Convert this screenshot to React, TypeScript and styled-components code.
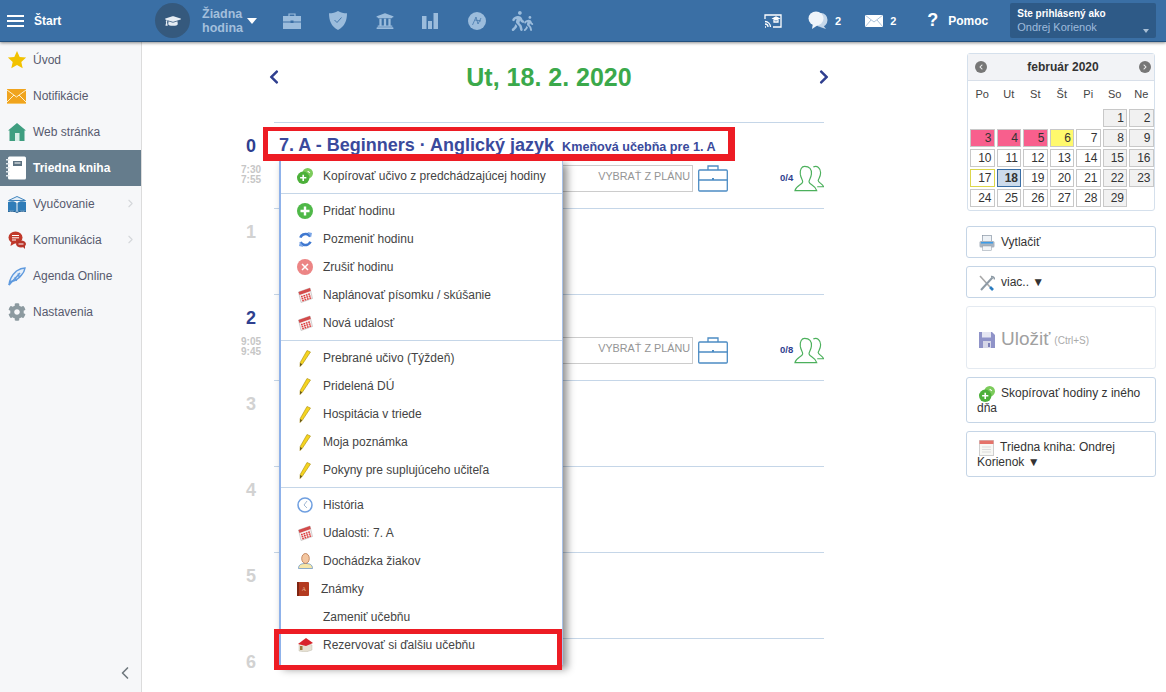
import React from 'react';
import styled, { createGlobalStyle } from 'styled-components';
import { FaCog, FaGraduationCap, FaUniversity, FaWalking, FaChevronLeft, FaChevronRight } from 'react-icons/fa';
import { ChevronLeft, ChevronRight } from 'lucide-react';

const GlobalStyle = createGlobalStyle`
  html, body { margin: 0; padding: 0; height: 692px; overflow: hidden; background: #fff; }
  body { font-family: "Liberation Sans", Arial, sans-serif; font-size: 12px; color: #333; }
  * { box-sizing: border-box; }
`;

/* ---------- drawn icons ---------- */

const Star = () => (
  <svg width="20" height="20" viewBox="0 0 20 20"><path d="M10 1l2.700 5.900 6.400.7-4.800 4.300 1.400 6.400L10 15l-5.700 3.300 1.400-6.400L.9 7.600l6.400-.7z" fill="#f2c200" /></svg>
);
const MailOrange = () => (
  <svg width="19" height="15" viewBox="0 0 19 15"><rect width="19" height="14" fill="#f0a41e" /><rect y="14" width="19" height="1" fill="#f6c66a" /><path d="M0 1l9.500 7L19 1M0 13l7-7M19 13l-7-7" stroke="#fff2d0" strokeWidth="1" fill="none" /></svg>
);
const House = () => (
  <svg width="18" height="18" viewBox="0 0 18 18"><path d="M9 0l9 7.500h-1.500V18h-15V7.500H0z" fill="#3f9e80" /><rect x="7" y="10" width="4.500" height="8" fill="#d8eee6" /></svg>
);
const Notebook = () => (
  <svg width="21" height="24" viewBox="0 0 21 24"><rect x="2" y="0.500" width="18" height="23" rx="1.500" fill="#fff" /><rect x="7" y="5" width="9" height="5" fill="#5d7281" /><rect x="8.500" y="6.500" width="6" height="1" fill="#fff" />{[3, 7, 11, 15, 19].map(y => <rect key={y} x="0" y={y} width="3.500" height="1.500" fill="#dfe5ea" />)}</svg>
);
const BookBlue = () => (
  <svg width="18" height="17" viewBox="0 0 18 17"><path d="M9 0.500L0.500 4.500h17z" fill="#e4eef7" stroke="#3f84bd" strokeWidth="1" /><path d="M0 6c3-1 7-1 8.500 1v9C7 14.500 3 14.500 0 15zM18 6c-3-1-7-1-8.500 1v9c1.500-1.500 5.500-1.500 8.500-1z" fill="#2f7cb8" /><path d="M0 15.500c3-.5 7-.5 9 1 2-1.500 6-1.500 9-1" stroke="#1f5f93" fill="none" /></svg>
);
const ChatRed = () => (
  <svg width="18" height="18" viewBox="0 0 18 18"><ellipse cx="7.500" cy="6.500" rx="7" ry="6" fill="#c0392b" /><path d="M3.500 10l-1 5 5-3z" fill="#c0392b" /><ellipse cx="13" cy="13" rx="5" ry="3.500" fill="#b8352a" /><path d="M14 15l3 3v-4z" fill="#b8352a" /><path d="M4 4.500h7M4 6.800h7M4 9h4" stroke="#fff" strokeWidth="1" /><path d="M10.500 13h5" stroke="#fff" strokeWidth="1" /></svg>
);
const Feather = () => (
  <svg width="18" height="19" viewBox="0 0 18 19" fill="none" stroke="#5f9ade" strokeWidth="1.500"><path d="M1 18c.500-6 3-10 7.500-14C11.500 2 14.500 1 17 1c-.500 3-1.500 5-3.500 7-3 4-7.500 6-10.500 6.500z" fill="#e6eff9" /><path d="M1 18L12 6M7 10l1.500 4M10 6.500l1.500 4" /></svg>
);
const Cast = () => (
  <svg width="18" height="14" viewBox="0 0 18 14" fill="none" stroke="#fff" strokeWidth="1.300"><path d="M1 5V1h16v12H9" /><path d="M1 13h1M1 10c1.700 0 3 1.300 3 3M1 7.500c3 0 5.500 2.500 5.500 5.500" /><path d="M9 4.500l3-1.500 3 1.500-3 1.500z" fill="#fff" /><path d="M10 6v2h4V6" /></svg>
);
const Bubbles = () => (
  <svg width="20" height="19" viewBox="0 0 20 19"><ellipse cx="13" cy="9" rx="6.500" ry="7" fill="#c4d7ea" /><path d="M15 14l3 4-6-2z" fill="#c4d7ea" /><ellipse cx="8" cy="7.500" rx="7.500" ry="7" fill="#eef4fa" /><path d="M5 12l-1 6 6-4z" fill="#eef4fa" /></svg>
);
const MailWhite = () => (
  <svg width="18" height="12" viewBox="0 0 18 12"><rect width="18" height="12" fill="#fff" /><path d="M0 0l9 7 9-7M0 12l6-7M18 12l-6-7" stroke="#8aa9c9" strokeWidth="0.700" fill="none" /></svg>
);
const TopCase = () => (
  <svg width="18" height="16" viewBox="0 0 18 16"><path d="M6 3V1h6v2" fill="none" stroke="#9bbcdc" strokeWidth="1.200" /><rect y="3" width="18" height="5.500" fill="#9bbcdc" /><rect y="9.500" width="18" height="6.500" fill="#9bbcdc" /><rect x="7.500" y="7.500" width="3" height="2.500" fill="#3a6fa5" /></svg>
);
const TopShield = () => (
  <svg width="18" height="19" viewBox="0 0 18 19"><path d="M9 0c2.500 1.500 5.500 2.300 9 2.300 0 7-2 13-9 16.700C2 15.300 0 9.300 0 2.300 3.500 2.300 6.500 1.500 9 0z" fill="#9bbcdc" /><path d="M5.500 9l2.500 2.500 4.500-5" stroke="#3a6fa5" strokeWidth="0.900" fill="none" /></svg>
);
const TopBars = () => (
  <svg width="16" height="16" viewBox="0 0 16 16" fill="#9bbcdc"><rect y="3" width="4.500" height="13" /><rect x="6" y="8" width="4" height="8" /><rect x="11.500" y="0" width="4.500" height="16" /></svg>
);
const TopDial = () => (
  <svg width="18" height="18" viewBox="0 0 18 18"><circle cx="9" cy="9" r="9" fill="#9bbcdc" /><path d="M4.500 13L8 5l2 7 3-6M7 8l6 1" stroke="#3a6fa5" strokeWidth="0.700" fill="none" /></svg>
);
const CopyGreen = () => (
  <svg width="16" height="16" viewBox="0 0 18 18"><circle cx="12" cy="6" r="6" fill="#7ccb5b" /><circle cx="7" cy="11" r="7" fill="#4cb03a" /><path d="M7 7.500v7M3.500 11h7" stroke="#fff" strokeWidth="1.800" /><path d="M12 3.500l2.500 2" stroke="#fff" strokeWidth="1.200" /></svg>
);
const PlusGreen = () => (
  <svg width="16" height="16" viewBox="0 0 16 16"><circle cx="8" cy="8" r="8" fill="#4fb848" /><path d="M8 3.500v9M3.500 8h9" stroke="#fff" strokeWidth="2.400" /></svg>
);
const Refresh = () => (
  <svg width="15" height="15" viewBox="0 0 15 15" fill="none"><circle cx="7.500" cy="7.500" r="5.500" stroke="#3f78d0" strokeWidth="2.600" strokeDasharray="12 5.300" transform="rotate(200 7.500 7.500)" /><path d="M9.500 0l4.500 1-1 4.500zM5.500 15L1 14l1-4.500z" fill="#7ba6e6" /></svg>
);
const CrossRed = () => (
  <svg width="16" height="16" viewBox="0 0 16 16"><circle cx="8" cy="8" r="8" fill="#ec8585" /><path d="M5 5l6 6M11 5l-6 6" stroke="#fff" strokeWidth="1.500" /></svg>
);
const CalendarRed = () => (
  <svg width="15" height="16" viewBox="0 0 15 16"><path d="M0.500 5L12 1l2.500 10.500L3 15.500z" fill="#f7eeee" stroke="#a8a8a8" strokeWidth="0.500" /><path d="M0.500 5L12 1l.8 3L1.500 8z" fill="#d34a4a" /><g fill="#dd3d3d">{[0, 1, 2].map(r => [0, 1, 2, 3].map(c => <rect key={`${r}${c}`} x={3 + c * 2.400 + r * 0.600} y={8.800 - c * 0.800 + r * 2} width="1.700" height="1.500" />))}</g></svg>
);
const Pencil = () => (
  <svg width="12" height="17" viewBox="0 0 12 17"><path d="M8 0.500L11.500 2 3.500 14 1 16.500 1.200 12.500z" fill="#f5d41f" stroke="#a88c12" strokeWidth="0.600" /><path d="M1 16.500l.2-3.500 2 1.200z" fill="#5f5218" /></svg>
);
const Clock = () => (
  <svg width="16" height="16" viewBox="0 0 16 16" fill="none"><circle cx="8" cy="8" r="7" stroke="#6f9fe0" strokeWidth="1.500" /><path d="M10 4L7 8l3 3" stroke="#8aa6c8" strokeWidth="0.800" /></svg>
);
const Person = () => (
  <svg width="15" height="16" viewBox="0 0 15 16"><path d="M0.500 15.500c0-4 3-5 7-5s7 1 7 5z" fill="#f6e6a8" stroke="#5b8ec4" strokeWidth="0.700" /><ellipse cx="7.500" cy="5.500" rx="3.800" ry="5" fill="#f3c6a0" stroke="#b0683c" strokeWidth="0.700" /></svg>
);
const RedBook = () => (
  <svg width="12" height="14" viewBox="0 0 12 14"><rect width="12" height="14" rx="1" fill="#b33a20" /><rect width="2" height="14" fill="#7e2512" /><text x="7" y="9" fontSize="6" fill="#e8b08a" textAnchor="middle" fontFamily="Liberation Serif, serif">A</text></svg>
);
const RedHouse = () => (
  <svg width="15" height="14" viewBox="0 0 15 14"><path d="M1 6.500V13l7 1 6-2V7L7 4z" fill="#e6e0d2" stroke="#b5b0a0" strokeWidth="0.400" /><path d="M0 6l8-6 7 5-7 3z" fill="#d8232a" /><rect x="2" y="8" width="2.500" height="4" fill="#9a7a3a" /></svg>
);
const Printer = () => (
  <svg width="16" height="16" viewBox="0 0 16 16"><rect x="3.500" y="0.500" width="9" height="6" fill="#eef2f6" stroke="#8b97a5" strokeWidth="0.700" /><rect x="0.500" y="6" width="15" height="6.500" rx="1.500" fill="#a9b4c0" /><rect x="2" y="7" width="12" height="1.500" fill="#3b9be8" /><rect x="3.500" y="11" width="9" height="4.500" fill="#f3f5f7" stroke="#8b97a5" strokeWidth="0.500" /></svg>
);
const Tools = () => (
  <svg width="16" height="17" viewBox="0 0 16 17" fill="none"><path d="M1 1l10 11" stroke="#a8a8a8" strokeWidth="1.600" /><path d="M11 12l3 3" stroke="#2a7cc0" strokeWidth="2.600" /><path d="M13.500 2.500L2 15" stroke="#8d9aa5" strokeWidth="2" /><path d="M12 1.500a3 3 0 0 1 3.500 3" stroke="#8d9aa5" strokeWidth="1.500" /></svg>
);
const Floppy = () => (
  <svg width="16" height="16" viewBox="0 0 16 16"><path d="M0 0h13l3 3v13H0z" fill="#8f93c8" /><rect x="3" y="0" width="9" height="5.500" fill="#e5e6f2" /><rect x="4" y="9" width="8" height="7" fill="#d6d7e8" /><rect x="9" y="11" width="2" height="4" fill="#7d81b8" /></svg>
);
const CalSmall = () => (
  <svg width="15" height="16" viewBox="0 0 15 16"><rect x="0.500" y="0.500" width="14" height="15" fill="#f8f8f4" stroke="#cfcfcf" /><rect x="0.500" y="0.500" width="14" height="3.500" fill="#e5736a" /><path d="M3 7h9M3 9.500h9M3 12h9" stroke="#dcdcdc" /></svg>
);
const CaseOutline = () => (
  <svg width="30" height="27" viewBox="0 0 30 27" fill="none" stroke="#4c8cc4" strokeWidth="1.300"><rect x="0.700" y="5" width="28.600" height="21" rx="1" /><path d="M0.700 15h28.600M10 5V1h10v4" /><rect x="14" y="13" width="2" height="2" fill="#4c8cc4" stroke="none" /></svg>
);
const Group = () => (
  <svg width="30" height="27" viewBox="0 0 31 27" fill="none" stroke="#4cb05c" strokeWidth="1.200"><path d="M20 1.500c4-1.500 7.500 1 7.500 6 0 4-2 6-2.500 8 0 2 5 4 5.500 6.500H24" /><path d="M11 1c5 0 7.500 3 7 8-.5 4-2.500 6-2.500 8 .5 3 7 4 8 9H1c1-5 7.500-6 8-9 0-2-2-4-2.500-8C6 4 8 1 11 1z" fill="#fff" /></svg>
);

/* ---------- data ---------- */

type MenuEntry = { label: string; icon?: React.ReactNode; shift?: boolean } | 'divider';

const menuEntries: MenuEntry[] = [
  { label: 'Kopírovať učivo z predchádzajúcej hodiny', icon: <CopyGreen /> },
  'divider',
  { label: 'Pridať hodinu', icon: <PlusGreen /> },
  { label: 'Pozmeniť hodinu', icon: <Refresh /> },
  { label: 'Zrušiť hodinu', icon: <CrossRed /> },
  { label: 'Naplánovať písomku / skúšanie', icon: <CalendarRed /> },
  { label: 'Nová udalosť', icon: <CalendarRed /> },
  'divider',
  { label: 'Prebrané učivo (Týždeň)', icon: <Pencil /> },
  { label: 'Pridelená DÚ', icon: <Pencil /> },
  { label: 'Hospitácia v triede', icon: <Pencil /> },
  { label: 'Moja poznámka', icon: <Pencil /> },
  { label: 'Pokyny pre suplujúceho učiteľa', icon: <Pencil /> },
  'divider',
  { label: 'História', icon: <Clock /> },
  { label: 'Udalosti: 7. A', icon: <CalendarRed /> },
  { label: 'Dochádzka žiakov', icon: <Person /> },
  { label: 'Známky', icon: <RedBook />, shift: true },
  { label: 'Zameniť učebňu' },
  { label: 'Rezervovať si ďalšiu učebňu', icon: <RedHouse /> },
];

const navItems = [
  { label: 'Úvod', icon: <Star /> },
  { label: 'Notifikácie', icon: <MailOrange /> },
  { label: 'Web stránka', icon: <House /> },
  { label: 'Triedna kniha', icon: <Notebook />, active: true },
  { label: 'Vyučovanie', icon: <BookBlue />, more: true },
  { label: 'Komunikácia', icon: <ChatRed />, more: true },
  { label: 'Agenda Online', icon: <Feather /> },
  { label: 'Nastavenia', icon: <FaCog size={18} color="#8c9aa0" /> },
];

const lessons = [
  { no: 0, on: true, from: '7:30', to: '7:55', count: '0/4' },
  { no: 1 },
  { no: 2, on: true, from: '9:05', to: '9:45', count: '0/8' },
  { no: 3 },
  { no: 4 },
  { no: 5 },
  { no: 6 },
];

const topTools = [
  <TopCase key="case" />,
  <TopShield key="shield" />,
  <FaUniversity key="bank" size={18} color="#9bbcdc" />,
  <TopBars key="bars" />,
  <TopDial key="dial" />,
];

const weekDays = ['Po', 'Ut', 'St', 'Št', 'Pi', 'So', 'Ne'];

type CellKind = 'plain' | 'weekend' | 'pink' | 'yellow' | 'now' | 'today';

const kindOf = (d: number): CellKind => {
  if (d >= 3 && d <= 5) return 'pink';
  if (d === 6) return 'yellow';
  if (d === 17) return 'now';
  if (d === 18) return 'today';
  if ([1, 2, 8, 9, 15, 16, 22, 23, 29].includes(d)) return 'weekend';
  return 'plain';
};

const cellColors: Record<CellKind, string> = {
  plain: 'background: #fff; border-color: #c8c8c8;',
  weekend: 'background: #f1f1f1; border-color: #c8c8c8;',
  pink: 'background: #f85f8d; border-color: #c8c8c8;',
  yellow: 'background: #fff96c; border-color: #c8c8c8;',
  now: 'background: #fff; border-color: #dcd64c;',
  today: 'background: #cddbeb; border-color: #3a6ea5; font-weight: bold;',
};

/* ---------- page ---------- */

const App = () => {
  return (
    <Page>
      <GlobalStyle />
      <TopBar>
        <Brand>
          <Burger><span /><span /><span /></Burger>
          <BrandName>Štart</BrandName>
        </Brand>
        <CapCircle><FaGraduationCap size={16} color="#e6edf4" /></CapCircle>
        <LessonPick>Žiadna<br />hodina</LessonPick>
        <DownCaret />
        <TopTools>
          {topTools.map(tool => <ToolCell key={tool.key}>{tool}</ToolCell>)}
          <Walkers><FaWalking size={20} /><FaWalking size={15} /></Walkers>
        </TopTools>
        <TopRight>
          <Cast />
          <Counter $left={26}><Bubbles /><b>2</b></Counter>
          <Counter $left={24}><MailWhite /><b>2</b></Counter>
          <Help><Question>?</Question>Pomoc</Help>
          <UserBox>
            <UserLabel>Ste prihlásený ako</UserLabel>
            <UserName>Ondrej Korienok</UserName>
            <UserCaret />
          </UserBox>
        </TopRight>
      </TopBar>

      <Body>
        <Sidebar>
          {navItems.map(item => (
            <NavRow key={item.label} $active={item.active}>
              <NavIcon>{item.icon}</NavIcon>
              <span>{item.label}</span>
              {item.more && <NavMore><ChevronRight size={13} /></NavMore>}
            </NavRow>
          ))}
          <Collapse><ChevronLeft size={20} /></Collapse>
        </Sidebar>

        <Main>
          <DayColumn>
            <DateBar>
              <DateArrow><FaChevronLeft size={16} /></DateArrow>
              <DateText>Ut, 18. 2. 2020</DateText>
              <DateArrow><FaChevronRight size={16} /></DateArrow>
            </DateBar>

            {lessons.map(l => (
              <LessonRow key={l.no}>
                <LessonTime>
                  <LessonNo $on={l.on}>{l.no}</LessonNo>
                  {l.from && <TimeText>{l.from}<br />{l.to}</TimeText>}
                </LessonTime>
                <LessonBody>
                  {l.count && (
                    <>
                      <PlanBox>VYBRAŤ Z PLÁNU</PlanBox>
                      <CaseOutline />
                      <CountText>{l.count}</CountText>
                      <Group />
                    </>
                  )}
                </LessonBody>
              </LessonRow>
            ))}

            <LessonTitle>
              7. A - Beginners · Anglický jazyk <RoomName>Kmeňová učebňa pre 1. A</RoomName>
            </LessonTitle>

            <PopMenu>
              {menuEntries.map((entry, i) =>
                entry === 'divider' ? (
                  <MenuDivider key={i} />
                ) : (
                  <MenuRow key={entry.label} $shift={entry.shift}>
                    <MenuIcon>{entry.icon}</MenuIcon>
                    {entry.label}
                  </MenuRow>
                )
              )}
            </PopMenu>

            <MarkTitle />
            <MarkRoom />
          </DayColumn>
        </Main>

        <RightColumn>
          <Calendar>
            <CalHead>
              <CalNav><FaChevronLeft size={6} /></CalNav>
              <span>február 2020</span>
              <CalNav><FaChevronRight size={6} /></CalNav>
            </CalHead>
            <CalGrid>
              {weekDays.map(d => <CalDay key={d}>{d}</CalDay>)}
              {[0, 1, 2, 3, 4].map(i => <CalBlank key={i} />)}
              {Array.from({ length: 29 }, (_, i) => i + 1).map(d => (
                <CalCell key={d} $kind={kindOf(d)}>{d}</CalCell>
              ))}
            </CalGrid>
          </Calendar>

          <SideButton><BtnIcon><Printer /></BtnIcon>Vytlačiť</SideButton>
          <SideButton><BtnIcon><Tools /></BtnIcon>viac.. ▼</SideButton>
          <SaveButton>
            <BtnIcon><Floppy /></BtnIcon><SaveText>Uložiť</SaveText> <SaveHint>(Ctrl+S)</SaveHint>
          </SaveButton>
          <SideButton><BtnIcon><CopyGreen /></BtnIcon>Skopírovať hodiny z iného dňa</SideButton>
          <SideButton><BtnIcon><CalSmall /></BtnIcon>Triedna kniha: Ondrej Korienok ▼</SideButton>
        </RightColumn>
      </Body>
    </Page>
  );
};

export default App;

const Page = styled.div`
  width: 1166px;
  height: 692px;
  display: flex;
  flex-direction: column;
  overflow: hidden;
`;

const TopBar = styled.header`
  height: 42px;
  flex: none;
  display: flex;
  align-items: center;
  background: #3a6fa5;
  border-bottom: 1px solid #23517f;
  box-shadow: 0 1px 3px rgba(0, 0, 0, 0.45);
  position: relative;
  z-index: 5;
`;

const Brand = styled.div`
  width: 155px;
  flex: none;
  display: flex;
  align-items: center;
  padding-left: 7px;
  gap: 10px;
`;

const Burger = styled.div`
  width: 17px;
  display: flex;
  flex-direction: column;
  gap: 3px;
  span {
    height: 2px;
    background: #fff;
  }
`;

const BrandName = styled.span`
  color: #fff;
  font-size: 12px;
  font-weight: bold;
`;

const CapCircle = styled.div`
  width: 35px;
  height: 35px;
  flex: none;
  border-radius: 50%;
  background: #35597d;
  display: flex;
  align-items: center;
  justify-content: center;
`;

const LessonPick = styled.div`
  margin-left: 12px;
  width: 45px;
  flex: none;
  color: #a3bfdc;
  font-size: 12.500px;
  font-weight: bold;
  line-height: 14px;
`;

const DownCaret = styled.div`
  width: 0;
  height: 0;
  flex: none;
  border-left: 5.500px solid transparent;
  border-right: 5.500px solid transparent;
  border-top: 6px solid #fff;
`;

const TopTools = styled.div`
  margin-left: 26px;
  display: flex;
  align-items: center;
  flex: none;
  width: 278px;
`;

const ToolCell = styled.div`
  width: 46.300px;
  display: flex;
  align-items: center;
`;

const Walkers = styled.div`
  display: flex;
  align-items: flex-end;
  color: #9bbcdc;
  margin-left: -6px;
  svg + svg {
    margin-left: -7px;
  }
`;

const TopRight = styled.div`
  margin-left: 203px;
  display: flex;
  flex: none;
  align-items: center;
  color: #fff;
`;

const Counter = styled.div<{ $left: number }>`
  margin-left: ${p => p.$left}px;
  display: flex;
  align-items: center;
  gap: 7px;
  font-size: 11px;
`;

const Help = styled.div`
  margin-left: 31px;
  display: flex;
  align-items: center;
  gap: 10px;
  font-weight: bold;
  font-size: 12px;
`;

const Question = styled.span`
  font-size: 18px;
  font-weight: bold;
`;

const UserBox = styled.div`
  position: relative;
  margin-left: 22px;
  width: 146px;
  height: 35px;
  padding: 4px 7px;
  background: #2e5a87;
  border-radius: 2px;
`;

const UserLabel = styled.div`
  font-size: 10px;
  font-weight: bold;
  line-height: 13px;
`;

const UserName = styled.div`
  font-size: 11px;
  line-height: 15px;
  color: #9fbbdc;
`;

const UserCaret = styled.div`
  position: absolute;
  right: 7px;
  bottom: 5px;
  width: 0;
  height: 0;
  border-left: 3.500px solid transparent;
  border-right: 3.500px solid transparent;
  border-top: 4px solid #a9bfd6;
`;

const Body = styled.div`
  flex: 1;
  display: flex;
  min-height: 0;
`;

const Sidebar = styled.nav`
  position: relative;
  width: 142px;
  flex: none;
  background: #f6f7f9;
  border-right: 1px solid #dcdcdc;
`;

const NavRow = styled.div<{ $active?: boolean }>`
  height: 36px;
  display: flex;
  align-items: center;
  font-size: 12px;
  color: ${p => (p.$active ? '#fff' : '#565a6e')};
  font-weight: ${p => (p.$active ? 'bold' : 'normal')};
  background: ${p => (p.$active ? '#657c8c' : 'transparent')};
  position: relative;
`;

const NavIcon = styled.span`
  width: 33px;
  display: flex;
  justify-content: center;
  flex: none;
`;

const NavMore = styled.span`
  position: absolute;
  right: 4px;
  top: 11px;
  color: #d5d7da;
`;

const Collapse = styled.div`
  position: absolute;
  left: 115px;
  bottom: 6px;
  color: #6f787e;
`;

const Main = styled.main`
  width: 824px;
  flex: none;
  padding-left: 90px;
`;

const DayColumn = styled.div`
  position: relative;
  width: 592px;
`;

const DateBar = styled.div`
  height: 80px;
  margin-left: 42px;
  padding-bottom: 10px;
  display: flex;
  align-items: center;
  justify-content: space-between;
`;

const DateArrow = styled.span`
  display: flex;
  color: #2f3f8f;
  margin: 0 -8px;
`;

const DateText = styled.div`
  font-size: 25px;
  font-weight: bold;
  color: #3ba94b;
`;

const LessonRow = styled.div`
  height: 86px;
  display: grid;
  grid-template-columns: 42px 1fr;
`;

const LessonTime = styled.div`
  width: 38px;
  text-align: center;
  color: #bbb;
`;

const LessonNo = styled.div<{ $on?: boolean }>`
  margin-top: 14px;
  font-size: 18px;
  line-height: 20px;
  font-weight: bold;
  color: ${p => (p.$on ? '#2f3f8f' : '#d2d2d2')};
`;

const TimeText = styled.div`
  margin-top: 9px;
  font-size: 10px;
  line-height: 10px;
  font-weight: bold;
  color: #c6c6c6;
`;

const LessonBody = styled.div`
  border-top: 1px solid #c5d6e8;
  padding-top: 42px;
  display: flex;
  align-items: flex-start;
`;

const PlanBox = styled.div`
  width: 393px;
  height: 27px;
  margin-left: 26px;
  margin-right: 5px;
  border: 1px solid #ccc;
  padding: 4px 2px 0 0;
  text-align: right;
  font-size: 10.800px;
  color: #949494;
`;

const CountText = styled.div`
  margin: 7px 0 0 52px;
  width: 14px;
  font-size: 9.500px;
  font-weight: bold;
  color: #2f3f8f;
  white-space: nowrap;
`;

const LessonTitle = styled.div`
  position: absolute;
  left: 47px;
  top: 93px;
  z-index: 1;
  white-space: nowrap;
  font-size: 18px;
  font-weight: bold;
  color: #3a4a9c;
`;

const RoomName = styled.span`
  font-size: 12.600px;
  margin-left: 3px;
`;

const PopMenu = styled.div`
  position: absolute;
  left: 47px;
  top: 118px;
  z-index: 2;
  width: 284px;
  padding: 2px 0 6px;
  background: #fff;
  border-left: 2px solid #8fb2ea;
  border-right: 1px solid #a9c2e8;
  box-shadow: 4px 4px 8px rgba(0, 0, 0, 0.45);
`;

const MenuRow = styled.div<{ $shift?: boolean }>`
  height: 28px;
  display: flex;
  align-items: center;
  font-size: 12px;
  color: #444;
  margin-left: ${p => (p.$shift ? '-2px' : '0')};
`;

const MenuIcon = styled.span`
  width: 42px;
  flex: none;
  display: flex;
  justify-content: center;
  padding-left: 6px;
`;

const MenuDivider = styled.div`
  height: 1px;
  margin: 3px 0;
  background: #c5d6e8;
`;

const MarkTitle = styled.div`
  position: absolute;
  left: 31px;
  top: 85px;
  z-index: 3;
  width: 472px;
  height: 34px;
  border: solid #ed1c24;
  border-width: 4px 7px 7px 5px;
  pointer-events: none;
`;

const MarkRoom = styled.div`
  position: absolute;
  left: 42px;
  top: 587px;
  z-index: 3;
  width: 288px;
  height: 41px;
  border: 5px solid #ed1c24;
  pointer-events: none;
`;

const RightColumn = styled.aside`
  width: 190px;
  flex: none;
  padding-top: 11px;
  display: flex;
  flex-direction: column;
  gap: 8px;
`;

const Calendar = styled.div`
  margin: 0 1px 7px;
  height: 158px;
  flex: none;
  border: 1px solid #d5e0ec;
  border-radius: 3px;
`;

const CalHead = styled.div`
  height: 27px;
  padding: 0 3px 0 7px;
  display: flex;
  align-items: center;
  justify-content: space-between;
  background: #f2f3f6;
  border-bottom: 1px solid #d8dfe9;
  font-weight: bold;
  font-size: 12px;
  color: #333;
`;

const CalNav = styled.span`
  width: 12px;
  height: 12px;
  border-radius: 50%;
  background: #777;
  color: #eee;
  display: flex;
  align-items: center;
  justify-content: center;
`;

const CalGrid = styled.div`
  display: grid;
  grid-template-columns: repeat(7, 24.500px);
  grid-template-rows: 26px repeat(5, 18px);
  gap: 2px;
  margin: 0 0 0 2px;
`;

const CalDay = styled.div`
  display: flex;
  align-items: center;
  justify-content: center;
  font-size: 11px;
  color: #444;
`;

const CalBlank = styled.div``;

const CalCell = styled.div<{ $kind: CellKind }>`
  border: 1px solid;
  ${p => cellColors[p.$kind]}
  text-align: right;
  padding-right: 2px;
  font-size: 12px;
  line-height: 16px;
  color: #333;
`;

const SideButton = styled.div`
  width: 190px;
  min-height: 32px;
  flex: none;
  padding: 8px 10px 6px;
  background: #fff;
  border: 1px solid #c5d5e6;
  border-radius: 3px;
  font-size: 12px;
  line-height: 15px;
  color: #333;
`;

const BtnIcon = styled.span`
  display: inline-block;
  height: 13px;
  vertical-align: -2px;
  margin: 0 6px 0 2px;
  svg {
    display: block;
  }
`;

const SaveButton = styled(SideButton)`
  height: 63px;
  display: flex;
  align-items: center;
  border-color: #e4eaf1;
  color: #999;
`;

const SaveText = styled.span`
  font-size: 19px;
  color: #a0a0a0;
`;

const SaveHint = styled.span`
  font-size: 10px;
  color: #aaa;
  margin: 4px 0 0 4px;
`;
